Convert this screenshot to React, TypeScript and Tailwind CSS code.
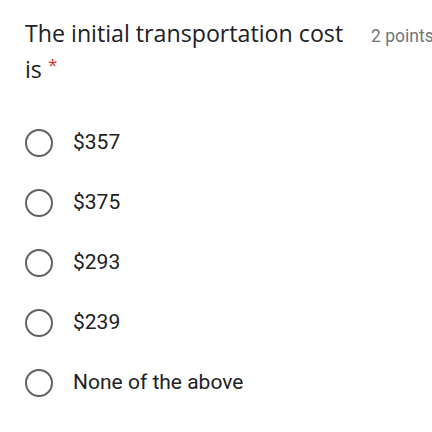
import React from "react";

const options = ["$357", "$375", "$293", "$239", "None of the above"];

export default function App() {
  return (
    <div className="w-[432px] h-[432px] overflow-hidden bg-white" style={{ fontFamily: "Roboto, 'Liberation Sans', sans-serif" }}>
      <div className="flex items-start pl-[25px] pt-[15px]">
        <div className="w-[330px] shrink-0 text-[23.2px] leading-[36px] text-[#202124]" style={{ fontFamily: "'Open Sans', Roboto, sans-serif" }}>
          The initial transportation cost is <span className="text-[#d93025] text-[17px] align-top leading-[28px]">*</span>
        </div>
        <div className="ml-[16px] mt-[8px] whitespace-nowrap text-[17.5px] text-[#70757a]">2 points</div>
      </div>
      <div className="flex flex-col pt-[26px]">
        {options.map((o) => (
          <div key={o} className="flex items-center h-[60px] pl-[25px]">
            <div className="w-[28px] h-[28px] shrink-0 rounded-full border-[2.5px] border-[#5f6368]" />
            <div className="ml-[20px] text-[21px] text-[#202124]">{o}</div>
          </div>
        ))}
      </div>
    </div>
  );
}
